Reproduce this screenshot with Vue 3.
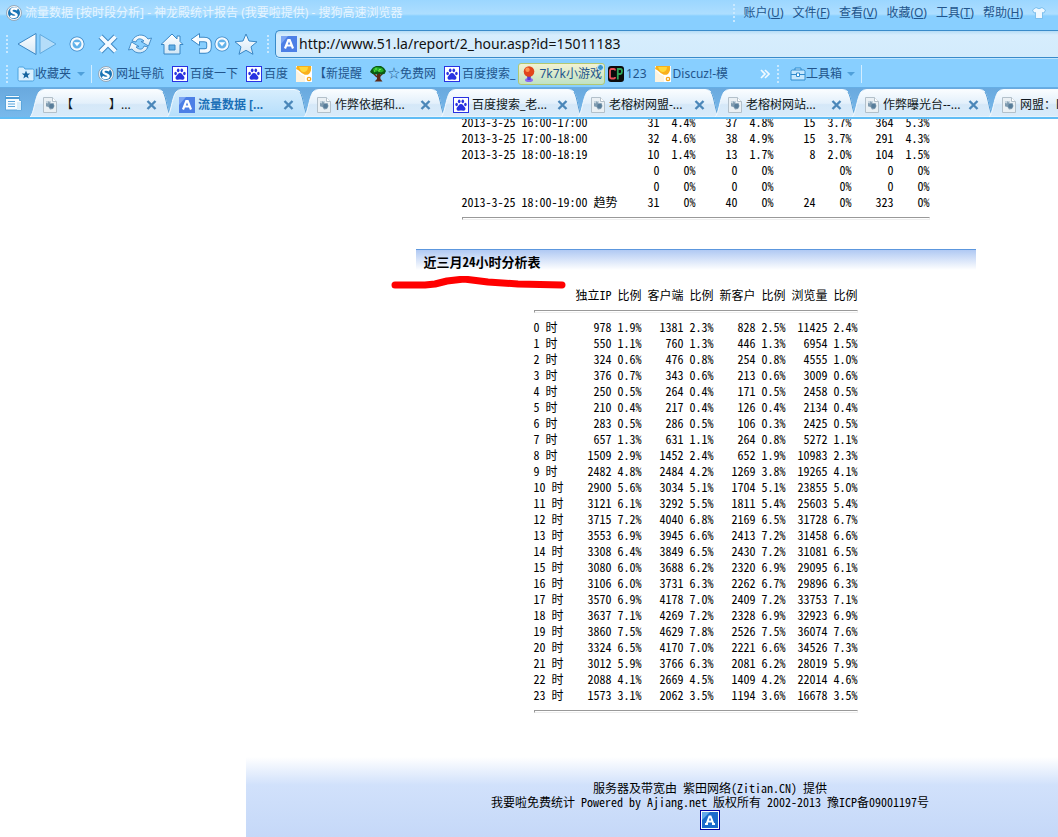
<script setup>
import { ref } from 'vue'

const url = ref('http://www.51.la/report/2_hour.asp?id=15011183')
const menus = [['账户', 'U'], ['文件', 'F'], ['查看', 'V'], ['收藏', 'O'], ['工具', 'T'], ['帮助', 'H']]
const bookmarks = [
  { icon: 'i-sogou', text: '网址导航' },
  { icon: 'i-paw', text: '百度一下' },
  { icon: 'i-paw', text: '百度' },
  { icon: 'i-duck', text: '【新提醒' },
  { icon: 'i-tree', text: '☆免费网' },
  { icon: 'i-paw', text: '百度搜索_' },
  { icon: 'i-balloon', text: '7k7k小游戏', hot: true },
  { icon: 'i-cp', text: '123' },
  { icon: 'i-duck', text: 'Discuz!-模' },
]
const tabs = [
  { icon: 'i-page', text: '【　　　】...' },
  { icon: 'i-a', text: '流量数据 [...', active: true },
  { icon: 'i-page', text: '作弊依据和...' },
  { icon: 'i-paw', text: '百度搜索_老...' },
  { icon: 'i-page', text: '老榕树网盟-...' },
  { icon: 'i-page', text: '老榕树网站...' },
  { icon: 'i-page', text: '作弊曝光台--...' },
  { icon: 'i-page', text: '网盟：l...' },
]
const today = [
  ['2013-3-25 16:00-17:00', '31', '4.4%', '37', '4.8%', '15', '3.7%', '364', '5.3%'],
  ['2013-3-25 17:00-18:00', '32', '4.6%', '38', '4.9%', '15', '3.7%', '291', '4.3%'],
  ['2013-3-25 18:00-18:19', '10', '1.4%', '13', '1.7%', '8', '2.0%', '104', '1.5%'],
  ['', '0', '0%', '0', '0%', '', '0%', '0', '0%'],
  ['', '0', '0%', '0', '0%', '', '0%', '0', '0%'],
  ['2013-3-25 18:00-19:00 趋势', '31', '0%', '40', '0%', '24', '0%', '323', '0%'],
]
const heads = ['独立IP', '比例', '客户端', '比例', '新客户', '比例', '浏览量', '比例']
const hours = `978 1.9 1381 2.3 828 2.5 11425 2.4
550 1.1 760 1.3 446 1.3 6954 1.5
324 0.6 476 0.8 254 0.8 4555 1.0
376 0.7 343 0.6 213 0.6 3009 0.6
250 0.5 264 0.4 171 0.5 2458 0.5
210 0.4 217 0.4 126 0.4 2134 0.4
283 0.5 286 0.5 106 0.3 2425 0.5
657 1.3 631 1.1 264 0.8 5272 1.1
1509 2.9 1452 2.4 652 1.9 10983 2.3
2482 4.8 2484 4.2 1269 3.8 19265 4.1
2900 5.6 3034 5.1 1704 5.1 23855 5.0
3121 6.1 3292 5.5 1811 5.4 25603 5.4
3715 7.2 4040 6.8 2169 6.5 31728 6.7
3553 6.9 3945 6.6 2413 7.2 31458 6.6
3308 6.4 3849 6.5 2430 7.2 31081 6.5
3080 6.0 3688 6.2 2320 6.9 29095 6.1
3106 6.0 3731 6.3 2262 6.7 29896 6.3
3570 6.9 4178 7.0 2409 7.2 33753 7.1
3637 7.1 4269 7.2 2328 6.9 32923 6.9
3860 7.5 4629 7.8 2526 7.5 36074 7.6
3324 6.5 4170 7.0 2221 6.6 34526 7.3
3012 5.9 3766 6.3 2081 6.2 28019 5.9
2088 4.1 2669 4.5 1409 4.2 22014 4.6
1573 3.1 2062 3.5 1194 3.6 16678 3.5`
  .split('\n')
  .map((line) => line.split(' ').map((v, i) => (i % 2 ? v + '%' : v)))
</script>

<template>
  <div class="window">
    <svg class="defs" aria-hidden="true">
      <defs>
        <linearGradient id="steel" x1="0" y1="0" x2="0" y2="1">
          <stop offset="0" stop-color="#ffffff" /><stop offset="1" stop-color="#d3e7f6" />
        </linearGradient>
        <linearGradient id="tabfill" x1="0" y1="0" x2="0" y2="1">
          <stop offset="0" stop-color="#fafdff" /><stop offset="0.5" stop-color="#e3f0fb" /><stop offset="0.55" stop-color="#d5e8f8" /><stop offset="1" stop-color="#d9ebfa" />
        </linearGradient>
        <linearGradient id="tabon" x1="0" y1="0" x2="0" y2="1">
          <stop offset="0" stop-color="#d6edfd" /><stop offset="1" stop-color="#b5defb" />
        </linearGradient>
      </defs>
      <symbol id="i-sogou" viewBox="0 0 16 16">
        <circle cx="8" cy="8" r="7.5" fill="#f2f6f9" stroke="#8798a8" stroke-width="0.8" />
        <circle cx="8" cy="8" r="6" fill="#1b74b4" />
        <path d="M11.5 4.3C8 2.6 5.2 3.9 5.3 6c.1 2.200 5.400 1.900 5.300 4.200-.1 2-3.600 2.300-6.300.7" fill="none" stroke="#fff" stroke-width="2.4" />
      </symbol>
      <symbol id="i-paw" viewBox="0 0 16 16">
        <rect x="0.500" y="0.500" width="15" height="15" fill="#fff" stroke="#2932e1" />
        <g fill="#2932e1">
          <ellipse cx="3.600" cy="7.500" rx="1.300" ry="1.800" /><ellipse cx="6.200" cy="4.300" rx="1.300" ry="1.900" />
          <ellipse cx="9.800" cy="4.300" rx="1.300" ry="1.900" /><ellipse cx="12.400" cy="7.500" rx="1.300" ry="1.800" />
          <path d="M8 7c2 0 2.500 2 4 3.500 1.300 1.800-.3 3.700-2 3.300-1.500-.3-2.500-.3-4 0-1.700.4-3.300-1.500-2-3.300C5.500 9 6 7 8 7z" />
        </g>
      </symbol>
      <symbol id="i-duck" viewBox="0 0 16 16">
        <path d="M0 0h16v16H0z" fill="#fff" />
        <path d="M1 0h14c.5 3 0 6-2 8-2 1.300-4 1-5.500 0C5 7 3 4 0 3z" fill="#f9b01c" />
        <path d="M3 1h9c0 3-2 5-4.500 5S4 3 3 1z" fill="#ffd83a" />
        <path d="M0 4c3 2 4 5 9 6v6H0z" fill="#fdf3df" />
        <circle cx="13" cy="13" r="1.700" fill="#fff" stroke="#f7a51b" stroke-width="1.300" />
      </symbol>
      <symbol id="i-tree" viewBox="0 0 16 16">
        <path d="M7 7h3l.5 6 2 2.500H4.500L7 13z" fill="#5d2815" />
        <path d="M3 7l4 4M13 7l-4 4" stroke="#5d2815" stroke-width="1.500" />
        <path d="M1 4l2-2.500L6 0h5l3 2 2 3-1.500 3-4 .5-1-1.500-2 1.500-5-.5L0 6z" fill="#0a5a12" />
        <path d="M3 3l3-2 3 .5 3 .5 2 3-3 1.500L8 5 4 6.500z" fill="#25b02c" />
        <path d="M5 3h2M9 3.500h2M4 5h1M8 5h2" stroke="#75ea51" />
      </symbol>
      <symbol id="i-balloon" viewBox="0 0 16 16">
        <ellipse cx="8" cy="14" rx="4" ry="2" fill="#8b6cf0" />
        <path d="M6 10h4l-.5 4h-3z" fill="#5a3dd0" />
        <circle cx="8" cy="5.500" r="5.300" fill="#e2451c" />
        <circle cx="6.500" cy="3.800" r="2.200" fill="#ff9350" />
      </symbol>
      <symbol id="i-cp" viewBox="0 0 16 16">
        <rect width="16" height="16" rx="3" fill="#0b0b0b" />
        <path d="M7 4.500V4q0-1-1-1H3.500q-1.500 0-1.500 2v5.500q0 2 1.500 2H6q1 0 1-1V11" fill="none" stroke="#e8505a" stroke-width="1.800" />
        <path d="M9.800 13.500V3h2.700Q14 3 14 5.300T12.500 8H10" fill="none" stroke="#2fa65a" stroke-width="1.800" />
      </symbol>
      <symbol id="i-page" viewBox="0 0 16 16">
        <path d="M1.500.5h9l4 4v11h-13z" fill="#eaf0f4" stroke="#b3c0ca" />
        <path d="M10.500.5v4h4" fill="#fff" stroke="#b3c0ca" />
        <path d="M4 4h5v6H4z" fill="#c4d3de" />
        <path d="M4 6l2 .500L6.500 4l2 2.500 3-.5 1 3-1.500 3-3 .5-1.500-2.500L4 9z" fill="#7f9bb0" />
        <circle cx="9.500" cy="9" r="2.300" fill="#587d9a" />
      </symbol>
      <symbol id="i-a" viewBox="0 0 16 16">
        <rect width="16" height="16" fill="#4c7fe6" />
        <path d="M0 0h7L0 8z" fill="#7ba5f3" />
        <path d="M4 12.500L7.300 4h1.400L12 12.500M5.500 9.500h5" fill="none" stroke="#fff" stroke-width="2.200" />
      </symbol>
      <symbol id="i-badge" viewBox="0 0 16 16">
        <rect width="16" height="16" fill="#1b6bcb" />
        <path d="M0 0h8L0 8z" fill="#63a8ea" />
        <path d="M4.500 12L7.400 4.500h1.200L11.500 12M6 9.500h4M3 12h3m4 0h3" fill="none" stroke="#fff" stroke-width="1.900" />
      </symbol>
      <symbol id="i-drop" viewBox="0 0 16 16">
        <circle cx="8" cy="8" r="5.700" fill="#56a8e2" stroke="#3b87c5" stroke-width="3.600" />
        <circle cx="8" cy="8" r="5.600" fill="#62b2ea" stroke="#f4faff" stroke-width="2.200" />
        <path d="M4.800 6.300h6.400L8 10.300z" fill="#fff" />
      </symbol>
    </svg>

    <header class="chrome">
      <div class="titlebar">
        <svg class="ic"><use href="#i-sogou" /></svg>
        <span class="caption">流量数据 [按时段分析] - 神龙殿统计报告 (我要啦提供) - 搜狗高速浏览器</span>
        <nav class="menus">
          <i class="grip"></i>
          <button v-for="m in menus" :key="m[1]" type="button">{{ m[0] }}(<u>{{ m[1] }}</u>)</button>
          <button type="button" aria-label="皮肤">
            <svg width="14" height="12" viewBox="0 0 14 12"><path d="M4 .5L.5 3l1.500 3 1.500-.5v6h7v-6L12 6l1.500-3L10 .5Q7 3 4 .500z" fill="#eef8ff" stroke="#6bb6ea" stroke-width="0.800" /></svg>
          </button>
        </nav>
      </div>

      <div class="navbar">
        <i class="grip"></i>
        <div class="tools">
          <button type="button" aria-label="后退"><svg width="22" height="26" viewBox="0 0 22 26"><path d="M2 13L20 2.500v21z" fill="url(#steel)" stroke="#3986c4" stroke-linejoin="round" /></svg></button>
          <button type="button" aria-label="前进"><svg width="20" height="24" viewBox="0 0 20 24"><path d="M18 12L2 2.500v19z" fill="#b5ddf9" stroke="#60aadf" stroke-linejoin="round" /></svg></button>
          <button type="button" class="dd" aria-label="历史"><svg width="16" height="16"><use href="#i-drop" /></svg></button>
          <button type="button" class="stop" aria-label="停止"><svg width="22" height="22" viewBox="0 0 22 22"><path d="M3.500 3.500l15 15m0-15l-15 15" stroke="#3986c4" stroke-width="5.600" /><path d="M3.500 3.500l15 15m0-15l-15 15" stroke="#f4faff" stroke-width="3.800" /></svg></button>
          <button type="button" aria-label="刷新"><svg width="26" height="22" viewBox="0 0 26 22"><g fill="url(#steel)" stroke="#3986c4" stroke-width="0.900"><path d="M5 8C8 1 17 0 21 6l3.500-1-3 8-7.500-4.500L17 8C14 5 10 5 9 9z" /><path d="M21 14C18 21 9 22 5 16l-3.500 1 3-8L12 13.500 9 14c3 3 7 3 8-1z" /></g></svg></button>
          <button type="button" aria-label="主页"><svg width="24" height="22" viewBox="0 0 24 22"><path d="M12 1L1 11.500h3V21h16v-9.500h3l-3-3V3h-3v3z" fill="url(#steel)" stroke="#3986c4" stroke-linejoin="round" /><path d="M9 12h6v5H9z" fill="#64b1e8" stroke="#3986c4" /></svg></button>
          <button type="button" class="undo" aria-label="恢复"><svg width="22" height="22" viewBox="0 0 22 22"><path d="M7 6.500h7q5 0 5 4v3.500q0 4-4 4H9" fill="none" stroke="#3986c4" stroke-width="5.400" /><path d="M1 6.500L9.500.5v12z" fill="#fff" stroke="#3986c4" /><path d="M7 6.500h7q5 0 5 4v3.500q0 4-4 4H9.800" fill="none" stroke="#f4faff" stroke-width="3.600" /></svg></button>
          <button type="button" aria-label="列表"><svg width="16" height="16"><use href="#i-drop" /></svg></button>
          <button type="button" class="star" aria-label="收藏"><svg width="24" height="22" viewBox="0 0 24 22"><path d="M12 1l3 7 8 .8-6 5 2 7.500-7-4-7 4 2-7.500-6-5L9 8z" fill="url(#steel)" stroke="#3986c4" stroke-linejoin="round" /></svg></button>
        </div>
        <i class="grip"></i>
        <label class="address">
          <svg class="ic"><use href="#i-a" /></svg>
          <input v-model="url" type="text" aria-label="地址" spellcheck="false" />
        </label>
      </div>

      <div class="links">
        <i class="grip"></i>
        <button type="button" class="fav">
          <svg width="18" height="16" viewBox="0 0 18 16"><path d="M1 2.500Q1 1 2.500 1h4l1.500 2h7.500Q17 3 17 4.500v9q0 1.500-1.500 1.500h-13Q1 15 1 13.500z" fill="#d9f0ff" stroke="#4da2de" /><path d="M9 4.500l1.200 3h3l-2.400 2 .900 3L9 10.700l-2.700 1.800.9-3-2.400-2h3z" fill="#14649f" /></svg>收藏夹<i class="caret"></i>
        </button>
        <i class="rule"></i>
        <div class="marks">
          <a v-for="(b, i) in bookmarks" :key="i" href="#" :class="{ hot: b.hot }">
            <svg class="ic"><use :href="'#' + b.icon" /></svg>{{ b.text }}<i v-if="b.hot" class="dot"></i>
          </a>
        </div>
        <button type="button" class="more" aria-label="更多">
          <svg width="10" height="10" viewBox="0 0 10 10"><path d="M1 1l4 4-4 4M5 1l4 4-4 4" fill="none" stroke="#f3faff" stroke-width="1.600" /></svg>
        </button>
        <i class="grip"></i>
        <button type="button" class="box">
          <svg width="16" height="14" viewBox="0 0 16 14"><path d="M5 3V1h6v2M1 4.500Q1 3 2.500 3h11Q15 3 15 4.500V13H1z" fill="#c5e7fd" stroke="#318cce" /><path d="M1 7.500h5m4 0h5" stroke="#318cce" /><path d="M6.500 6h3v3.500h-3z" fill="#fff" stroke="#318cce" /></svg>工具箱<i class="caret"></i>
        </button>
        <i class="rule"></i>
      </div>

      <nav class="tabs">
        <button type="button" class="list" aria-label="标签列表">
          <svg width="18" height="16" viewBox="0 0 18 16"><path d="M1.500.5h14v5h2v9.500h-16z" fill="#f5fbff" stroke="#5ba5dc" /><path d="M1.500 3h14" stroke="#4d9bd5" stroke-width="2" /><path d="M4 6.500h7M4 9h7M4 11.500h7" stroke="#5ba5dc" /><path d="M13 7h4v8h-4z" fill="#d7edfb" /></svg>
        </button>
        <div v-for="(t, i) in tabs" :key="i" class="tab" :class="{ active: t.active }">
          <svg class="shape" viewBox="0 0 142 28" preserveAspectRatio="none"><path d="M0 28C4 25 5 8 9 3q2-2.500 6-2.500h112q4 0 6 2.500c4 6 4 22 9 25z" :fill="t.active ? 'url(#tabon)' : 'url(#tabfill)'" stroke="#f5fbff" /><path d="M133 3c4 6 4 22 9 25" fill="none" stroke="#529bd5" /></svg>
          <svg class="ic"><use :href="'#' + t.icon" /></svg>
          <a href="#">{{ t.text }}</a>
          <button type="button" aria-label="关闭"><svg width="11" height="10" viewBox="0 0 11 10"><path d="M1.500 1l8 8m0-8l-8 8" stroke="#4b87b9" stroke-width="2.400" /></svg></button>
        </div>
      </nav>
    </header>

    <div class="page">
      <main>
        <table class="today">
          <colgroup><col class="when" /><template v-for="n in 4" :key="n"><col class="num" /><col class="pct" /></template></colgroup>
          <tbody>
            <tr v-for="(r, i) in today" :key="i"><td v-for="(c, j) in r" :key="j">{{ c }}</td></tr>
            <tr><td colspan="9"><hr /></td></tr>
          </tbody>
        </table>

        <section class="report">
          <h2>近三月24小时分析表</h2>
          <svg class="scrawl" width="176" height="14" viewBox="0 0 176 14"><path d="M4 9h30l10-1 12-3 17-2 24 3 30 2 44 1" fill="none" stroke="#f00" stroke-width="7" stroke-linecap="round" stroke-linejoin="round" /></svg>
          <table class="hours">
            <colgroup><col class="when" /><template v-for="n in 4" :key="n"><col class="num" /><col class="pct" /></template></colgroup>
            <thead>
              <tr><td></td><th v-for="(h, i) in heads" :key="i">{{ h }}</th></tr>
              <tr><td colspan="9"><hr /></td></tr>
            </thead>
            <tbody>
              <tr v-for="(r, i) in hours" :key="i"><td>{{ i }} 时</td><td v-for="(c, j) in r" :key="j">{{ c }}</td></tr>
              <tr><td colspan="9"><hr /></td></tr>
            </tbody>
          </table>
        </section>
      </main>
      <footer>
        <p>服务器及带宽由 紫田网络(Zitian.CN) 提供</p>
        <p>我要啦免费统计 Powered by Ajiang.net 版权所有 2002-2013 豫ICP备09001197号</p>
        <a href="#" class="badge" aria-label="我要啦"><svg width="16" height="16"><use href="#i-badge" /></svg></a>
      </footer>
    </div>
  </div>
</template>

<style>
html, body { margin: 0; height: 100%; background: #fff; }
#app { height: 100%; }
</style>

<style scoped>
* { box-sizing: border-box; }
.window { min-height: 100%; display: flex; flex-direction: column; overflow: hidden; }
.defs { position: absolute; width: 0; height: 0; }
button { border: 0; padding: 0; background: none; font: inherit; color: inherit; display: flex; align-items: center; white-space: nowrap; }
a { color: inherit; text-decoration: none; }
svg { display: block; flex: none; }
.ic { width: 16px; height: 16px; }
.chrome { font: 12px/16px "Noto Sans", "Noto Sans CJK SC", sans-serif; color: #22558c; background: #88cfff; }
.grip { flex: none; width: 2px; height: 18px; background: repeating-linear-gradient(#c9e9ff 0 2px, transparent 2px 4px); }
.rule { flex: none; width: 1px; height: 18px; background: #d2edff; }
.caret { border: 4px solid transparent; border-top-color: #4fa0da; border-bottom: 0; }

.titlebar { height: 30px; padding: 0 12px 4px 6px; display: flex; align-items: center; background: linear-gradient(#9bd6ff, #addeff 14px, #88cfff 16px); }
.caption { margin-left: 3px; flex: 1; color: #e6f5ff; white-space: nowrap; overflow: hidden; }
.menus { display: flex; align-items: center; gap: 9px; }

.navbar { height: 28px; padding-left: 6px; display: flex; align-items: center; }
.tools { display: flex; align-items: center; flex: none; width: 251px; margin: 0 0 0 8px; }
.tools .dd { margin-left: 11px; }
.tools .stop { margin: 0 8px 0 12px; }
.tools button + button:nth-child(6) { margin-left: 7px; }
.tools .undo { margin: 0 2px 0 6px; }
.tools .star { margin-left: 4px; }
.address { flex: 1; min-width: 0; height: 28px; margin-left: 6px; display: flex; align-items: center; padding-left: 5px; border: 1px solid #398bca; border-right: 0; border-radius: 5px 0 0 5px; background: linear-gradient(#b5dcf6, #d6edfd 4px, #d3ebfc); box-shadow: 0 1px 0 #bfe5ff; }
.address input { flex: 1; min-width: 0; border: 0; outline: 0; padding: 0 0 0 2px; background: none; color: #111; font: 14px/22px "Noto Sans", sans-serif; }

.links { height: 30px; padding: 2px 0 0 6px; display: flex; align-items: center; border-bottom: 1px solid #66aee5; }
.fav { margin: 0 6px 0 9px; }
.fav .caret { margin-left: 6px; }
.marks { display: flex; align-items: center; gap: 8px; margin-left: 6px; flex: none; width: 622px; }
.marks a { display: flex; align-items: center; gap: 2px; white-space: nowrap; position: relative; }
.marks .hot { height: 22px; margin: 0 -5px; padding: 0 2px; border: 1px solid #b2c872; border-radius: 3px; background: linear-gradient(#f3f2d2, #bfe2c5); }
.dot { position: absolute; right: 0; top: 0; width: 7px; height: 7px; border: 1px solid #d4efff; border-radius: 50%; background: #3793cc; }
.more { margin-left: 40px; }
.links .more + .grip { margin: 0 11px 0 7px; }
.box .caret { margin: 0 6px 0 5px; }

.tabs { height: 31px; display: flex; align-items: flex-end; background: linear-gradient(#69a9de, #78b9ec); border-bottom: 2px solid #61bdf5; overflow: hidden; }
.list { flex: none; width: 30px; height: 28px; padding-left: 4px; }
.tab { flex: none; position: relative; width: 142px; height: 28px; margin-right: -5px; display: flex; align-items: center; padding: 3px 15px 0 12px; color: #101820; }
.tab > * { position: relative; }
.tab .shape { position: absolute; left: 0; top: 0; width: 100%; height: 100%; }
.tab a { flex: 1; margin-left: 3px; white-space: nowrap; overflow: hidden; }
.active { font-weight: bold; color: #1a6fb7; }

.page { flex: 1; display: flex; flex-direction: column; overflow: hidden; background: #fff; color: #000; font: 12px/16px "Noto Sans CJK SC", sans-serif; font-feature-settings: "hwid"; }
main { margin-top: -5px; padding-left: 333px; display: flex; flex-direction: column; align-items: center; }
table { border-collapse: collapse; table-layout: fixed; }
td, th { height: 16px; padding: 0; font-weight: normal; line-height: 16px; text-align: right; white-space: nowrap; }
td:first-child { text-align: left; }
hr { height: 3px; margin: 0; border: 1px solid; border-color: #999 #eee #eee #999; }
.num { width: 42px; }
.today { width: 468px; }
.today .when { width: 156px; }
.today .pct { width: 36px; }
.hours { width: 324px; }
.hours .when { width: 36px; }
.hours .pct { width: 30px; }
.report { position: relative; width: 560px; margin-top: 23px; display: flex; flex-direction: column; align-items: center; }
h2 { width: 100%; height: 21px; margin: 0 0 17px; padding: 4px 0 0 8px; border-top: 1px solid #5c97de; background: linear-gradient(#b0c9f3, #fff); font-size: 13px; line-height: 16px; }
.scrawl { position: absolute; left: -25px; top: 27px; }
footer { flex: 1; margin: 38px 0 0 246px; padding: 24px 0 7px 116px; display: flex; flex-direction: column; align-items: center; line-height: 14px; white-space: nowrap; background: linear-gradient(#fff, #d1e1fb 28px, #c5d8f8); }
footer p { margin: 0; }
.badge { margin-top: 1px; border: 1px solid #00009c; padding: 1px; background: #fff; }
</style>
